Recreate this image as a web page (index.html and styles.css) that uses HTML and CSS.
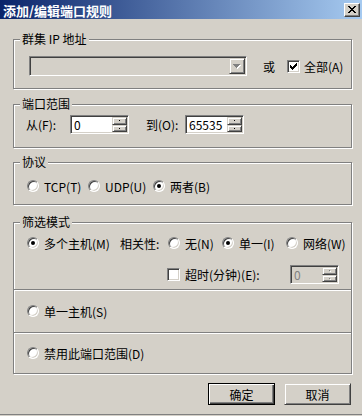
FILE: index.html
```html
<!DOCTYPE html>
<html lang="zh-CN">
<head>
  <meta charset="UTF-8">
  <title>添加/编辑端口规则</title>
  <link rel="stylesheet" href="styles.css">
</head>
<body>
  <div class="window">
    <div class="titlebar">
      <span class="title">添加/编辑端口规则</span>
      <span class="close-btn">
        <svg width="8" height="7" viewBox="0 0 8 7"><path d="M0 0h2v1H0z M6 0h2v1H6z M1 1h2v1H1z M5 1h2v1H5z M2 2h4v1H2z M3 3h2v1H3z M2 4h4v1H2z M1 5h2v1H1z M5 5h2v1H5z M0 6h2v1H0z M6 6h2v1H6z" fill="#000"/></svg>
      </span>
    </div>

    <fieldset class="group g-ip">
      <legend>群集 IP 地址</legend>
      <div class="row">
        <div class="combo">
          <span class="combo-btn">
            <svg width="8" height="5" viewBox="0 0 8 5"><path d="M1 1h7v1H1z M2 2h5v1H2z M3 3h3v1H3z M4 4h1v1H4z" fill="#fff"/><path d="M0 0h7v1H0z M1 1h5v1H1z M2 2h3v1H2z M3 3h1v1H3z" fill="#808080"/></svg>
          </span>
        </div>
        <span class="or">或</span>
        <span class="checkbox ck-all">
          <svg width="7" height="7" viewBox="0 0 7 7"><path d="M0 2h1v3H0z M1 3h1v3H1z M2 4h1v3H2z M3 3h1v3H3z M4 2h1v3H4z M5 1h1v3H5z M6 0h1v3H6z" fill="#000"/></svg>
        </span>
        <span class="ck-label">全部(A)</span>
      </div>
    </fieldset>

    <fieldset class="group g-port">
      <legend>端口范围</legend>
      <div class="row">
        <span class="lbl-from">从(F):</span>
        <div class="spin">
          <span class="spin-val">0</span>
          <span class="spin-btns">
            <span class="spin-btn"><i class="dot"></i></span>
            <span class="spin-btn"><i class="dot"></i></span>
          </span>
        </div>
        <span class="lbl-to">到(O):</span>
        <div class="spin">
          <span class="spin-val">65535</span>
          <span class="spin-btns">
            <span class="spin-btn"><i class="dot"></i></span>
            <span class="spin-btn"><i class="dot"></i></span>
          </span>
        </div>
      </div>
    </fieldset>

    <fieldset class="group g-proto">
      <legend>协议</legend>
      <div class="row">
        <span class="opt opt-tcp"><span class="radio"></span>TCP(T)</span>
        <span class="opt opt-udp"><span class="radio"></span>UDP(U)</span>
        <span class="opt"><span class="radio on"></span>两者(B)</span>
      </div>
    </fieldset>

    <fieldset class="group g-filter">
      <legend>筛选模式</legend>
      <div class="section sec-multi">
        <div class="row">
          <span class="opt opt-multi"><span class="radio on"></span>多个主机(M)</span>
          <span class="affinity">相关性:</span>
          <span class="opt opt-none"><span class="radio"></span>无(N)</span>
          <span class="opt opt-single"><span class="radio on"></span>单一(I)</span>
          <span class="opt"><span class="radio"></span>网络(W)</span>
        </div>
        <div class="row row-timeout">
          <span class="checkbox ck-timeout"></span>
          <span class="timeout-label">超时(分钟)(E):</span>
          <div class="spin spin-small disabled">
            <span class="spin-val">0</span>
            <span class="spin-btns">
              <span class="spin-btn"><i class="dot"></i></span>
              <span class="spin-btn"><i class="dot"></i></span>
            </span>
          </div>
        </div>
      </div>
      <div class="section sec-line sec-single">
        <span class="opt"><span class="radio"></span>单一主机(S)</span>
      </div>
      <div class="section sec-line sec-disable">
        <span class="opt"><span class="radio"></span>禁用此端口范围(D)</span>
      </div>
    </fieldset>

    <div class="buttons">
      <span class="btn btn-default">确定</span>
      <span class="btn">取消</span>
    </div>
  </div>
</body>
</html>
```

FILE: styles.css
```css
body {
  margin: 0;
  background-color: #d4d0c8;
  font-family: "Noto Sans CJK SC", sans-serif;
  font-size: 12px;
  color: #000;
}

.window {
  width: 362px;
  height: 415px;
  box-sizing: border-box;
  border-bottom: 1px solid #808080;
  display: flex;
  flex-direction: column;
}

/* title bar */
.titlebar {
  height: 19px;
  flex-shrink: 0;
  display: flex;
  align-items: center;
  justify-content: space-between;
  padding: 0 2px 0 3px;
  background: linear-gradient(to right, #0a246a, #a6caf0);
}

.title {
  color: #fff;
  font-weight: bold;
  font-size: 13px;
  line-height: 19px;
  padding-top: 2px;
}

.close-btn {
  width: 16px;
  height: 14px;
  box-sizing: border-box;
  display: flex;
  justify-content: center;
  align-items: center;
  background-color: #d4d0c8;
  border: 1px solid;
  border-color: #fff #404040 #404040 #fff;
  box-shadow: inset -1px -1px 0 #808080;
}

/* group boxes */
.group {
  margin: 0 0 0 13px;
  width: 339px;
  min-width: 0;
  box-sizing: border-box;
  padding: 0;
  border: 1px solid #808080;
  box-shadow: inset 1px 1px 0 #fff, 1px 1px 0 #fff;
}

.group legend {
  margin-left: 6px;
  padding: 0 2px;
  line-height: 16px;
  background-color: #d4d0c8;
}

.row {
  display: flex;
  align-items: center;
}

.g-ip {
  margin-top: 12px;
}

.g-ip .row {
  padding: 9px 0 12px 15px;
}

.g-port {
  margin-top: 7px;
}

.g-port .row {
  padding: 3px 0 13px 12px;
}

.g-proto {
  margin-top: 6px;
}

.g-proto .row {
  height: 16px;
  padding: 8px 0 10px 13px;
}

.g-filter {
  margin-top: 9px;
}

/* sunken fields */
.combo,
.spin,
.checkbox {
  box-sizing: border-box;
  border: 1px solid;
  border-color: #808080 #fff #fff #808080;
  box-shadow: inset 1px 1px 0 #404040, inset -1px -1px 0 #d4d0c8;
}

.combo {
  width: 218px;
  height: 20px;
  padding: 1px;
  display: flex;
  justify-content: flex-end;
  background-color: #d4d0c8;
}

.combo-btn,
.spin-btn,
.btn {
  box-sizing: border-box;
  background-color: #d4d0c8;
  border: 1px solid;
  border-color: #d4d0c8 #404040 #404040 #d4d0c8;
  box-shadow: inset 1px 1px 0 #fff, inset -1px -1px 0 #808080;
}

.combo-btn {
  width: 16px;
  height: 16px;
  display: flex;
  justify-content: center;
  align-items: center;
  padding-top: 1px;
}

.or {
  margin-left: 16px;
}

.checkbox {
  width: 13px;
  height: 13px;
  display: flex;
  justify-content: center;
  align-items: center;
  background-color: #fff;
}

.ck-all {
  margin-left: 12px;
}

.ck-label {
  margin-left: 4px;
}

/* spin edits */
.lbl-from {
  width: 44px;
}

.lbl-to {
  width: 39px;
  margin-left: 17px;
}

.spin {
  width: 59px;
  height: 19px;
  padding: 1px;
  display: flex;
  background-color: #fff;
}

.spin-val {
  flex: 1;
  padding-left: 2px;
  line-height: 15px;
}

.spin-btns {
  width: 15px;
  display: flex;
  flex-direction: column;
}

.spin-btn {
  flex: 1;
  display: flex;
  justify-content: center;
  align-items: center;
}

.dot {
  width: 1px;
  height: 1px;
  background-color: #000;
}

.spin.disabled {
  background-color: #d4d0c8;
  color: #808080;
}

.spin.disabled .dot {
  background-color: #808080;
  box-shadow: 1px 1px 0 #fff;
}

/* radio buttons */
.opt {
  display: inline-flex;
  align-items: center;
  white-space: nowrap;
}

.radio {
  width: 12px;
  height: 12px;
  box-sizing: border-box;
  margin-right: 5px;
  border-radius: 50%;
  border: 1px solid;
  border-color: #808080 #fff #fff #808080;
  box-shadow: inset 1px 1px 0 #404040, inset -1px -1px 0 #d4d0c8;
  background-color: #fff;
  display: flex;
  justify-content: center;
  align-items: center;
}

.radio.on::after {
  content: "";
  width: 4px;
  height: 4px;
  border-radius: 50%;
  background-color: #000;
}

.opt-tcp {
  width: 61px;
}

.opt-udp {
  width: 65px;
}

/* filter mode */
.sec-multi {
  padding: 5px 0 5px 13px;
}

.sec-multi .row {
  height: 16px;
}

.opt-multi {
  width: 93px;
}

.affinity {
  width: 48px;
}

.opt-none {
  width: 54px;
}

.opt-single {
  width: 64px;
}

.row-timeout {
  margin-top: 14px;
}

.sec-multi .row-timeout {
  height: 19px;
}

.ck-timeout {
  margin-left: 140px;
}

.timeout-label {
  width: 105px;
  margin-left: 5px;
}

.spin-small {
  width: 49px;
}

.section.sec-line {
  box-sizing: border-box;
  display: flex;
  align-items: center;
  padding-left: 13px;
  border-top: 1px solid #808080;
  box-shadow: inset 0 1px 0 #fff;
}

.sec-single {
  height: 43px;
}

.sec-disable {
  height: 41px;
}

/* dialog buttons */
.buttons {
  display: flex;
  justify-content: flex-end;
  gap: 9px;
  margin-top: 9px;
  padding-right: 11px;
}

.btn {
  width: 67px;
  height: 22px;
  display: flex;
  justify-content: center;
  align-items: center;
}

.btn-default {
  border-color: #000;
  box-shadow: inset 1px 1px 0 #fff, inset -1px -1px 0 #404040, inset -2px -2px 0 #808080;
}
```
